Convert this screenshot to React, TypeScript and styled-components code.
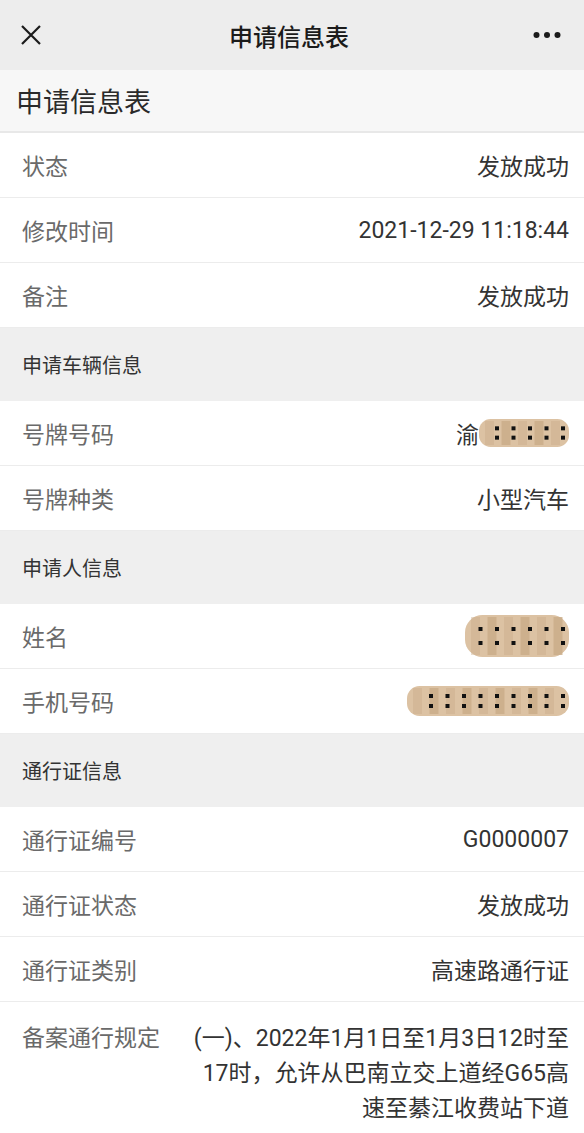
import React from 'react';
import styled, { createGlobalStyle } from 'styled-components';

const GlobalStyle = createGlobalStyle`
  html, body {
    margin: 0;
    padding: 0;
    background: #ffffff;
    font-family: Roboto, "Noto Sans CJK SC", "Noto Sans", sans-serif;
  }
  * { box-sizing: border-box; }
`;

const Page = styled.div`
  width: 584px;
  min-height: 1133px;
  background: #ffffff;
  overflow: hidden;
`;

const NavBar = styled.div`
  height: 70px;
  background: #ededed;
  display: flex;
  align-items: center;
  justify-content: space-between;
  padding: 0 22px 0 16px;
`;

const NavTitle = styled.div`
  font-size: 24px;
  font-weight: 500;
  color: #1b1b1b;
`;

const IconBox = styled.div`
  width: 30px;
  display: flex;
  align-items: center;
  justify-content: center;
`;

const Heading = styled.div`
  height: 63px;
  background: #f7f7f7;
  border-bottom: 2px solid #e8e8e8;
  display: flex;
  align-items: center;
  padding-left: 16px;
  font-size: 27px;
  color: #2a2a2a;
`;

const Row = styled.div<{ $tall?: boolean }>`
  display: flex;
  justify-content: space-between;
  align-items: ${(p) => (p.$tall ? 'flex-start' : 'center')};
  min-height: 65px;
  padding: ${(p) => (p.$tall ? '19px 15px 10px 22px' : '0 15px 0 22px')};
  border-bottom: 1px solid #ececec;
  background: #ffffff;
  font-size: 23px;
  line-height: ${(p) => (p.$tall ? '35px' : 'normal')};

  &:last-child {
    border-bottom: none;
  }
`;

const Label = styled.span`
  color: #6a6a6a;
  white-space: nowrap;
  flex-shrink: 0;
`;

const Value = styled.span<{ $wrap?: boolean }>`
  color: #333333;
  text-align: right;
  margin-left: ${(p) => (p.$wrap ? '24px' : '0')};
  max-width: ${(p) => (p.$wrap ? '386px' : 'none')};
`;

const Section = styled.div`
  height: 73px;
  background: #efefef;
  display: flex;
  align-items: center;
  padding-left: 22px;
  font-size: 20px;
  color: #333333;
`;

const Masked = styled.span`
  display: inline-flex;
  align-items: center;
  color: #333333;
`;

const Blur = ({ w, h, rows }: { w: number; h: number; rows: number }) => {
  const cols = Math.floor(w / 17);
  const dots: React.ReactNode[] = [];
  for (let r = 0; r < rows; r++) {
    for (let c = 0; c < cols; c++) {
      dots.push(
        <rect
          key={`${r}-${c}`}
          x={w - 8 - c * 16.5}
          y={(h / (rows + 1)) * (r + 1) - 2}
          width={4}
          height={4}
          fill="#111"
        />
      );
    }
  }
  return (
    <svg width={w} height={h} viewBox={`0 0 ${w} ${h}`}>
      <rect x={0} y={0} width={w} height={h} rx={h / 2.4} fill="#dcc2a3" />
      {Array.from({ length: cols }).map((_, i) => (
        <rect key={i} x={i * 16.5 + 6} y={2} width={9} height={h - 4} fill="#c9ab87" opacity={i % 2 ? 0.8 : 0.4} />
      ))}
      {dots}
    </svg>
  );
};

export default function App() {
  return (
    <Page>
      <GlobalStyle />
      <NavBar>
        <IconBox>
          <svg width="24" height="24" viewBox="0 0 24 24">
            <path d="M3 3 L21 21 M21 3 L3 21" stroke="#1b1b1b" strokeWidth="2.2" />
          </svg>
        </IconBox>
        <NavTitle>申请信息表</NavTitle>
        <IconBox>
          <svg width="28" height="8" viewBox="0 0 28 8">
            <circle cx="3.5" cy="4" r="3" fill="#1b1b1b" />
            <circle cx="14" cy="4" r="3" fill="#1b1b1b" />
            <circle cx="24.5" cy="4" r="3" fill="#1b1b1b" />
          </svg>
        </IconBox>
      </NavBar>
      <Heading>申请信息表</Heading>

      <Row><Label>状态</Label><Value>发放成功</Value></Row>
      <Row><Label>修改时间</Label><Value>2021-12-29 11:18:44</Value></Row>
      <Row><Label>备注</Label><Value>发放成功</Value></Row>

      <Section>申请车辆信息</Section>
      <Row>
        <Label>号牌号码</Label>
        <Masked>渝<Blur w={90} h={28} rows={2} /></Masked>
      </Row>
      <Row><Label>号牌种类</Label><Value>小型汽车</Value></Row>

      <Section>申请人信息</Section>
      <Row>
        <Label>姓名</Label>
        <Masked><Blur w={104} h={42} rows={2} /></Masked>
      </Row>
      <Row>
        <Label>手机号码</Label>
        <Masked><Blur w={162} h={30} rows={2} /></Masked>
      </Row>

      <Section>通行证信息</Section>
      <Row><Label>通行证编号</Label><Value>G0000007</Value></Row>
      <Row><Label>通行证状态</Label><Value>发放成功</Value></Row>
      <Row><Label>通行证类别</Label><Value>高速路通行证</Value></Row>
      <Row $tall>
        <Label>备案通行规定</Label>
        <Value $wrap>(一)、2022年1月1日至1月3日12时至17时，允许从巴南立交上道经G65高速至綦江收费站下道</Value>
      </Row>
    </Page>
  );
}
